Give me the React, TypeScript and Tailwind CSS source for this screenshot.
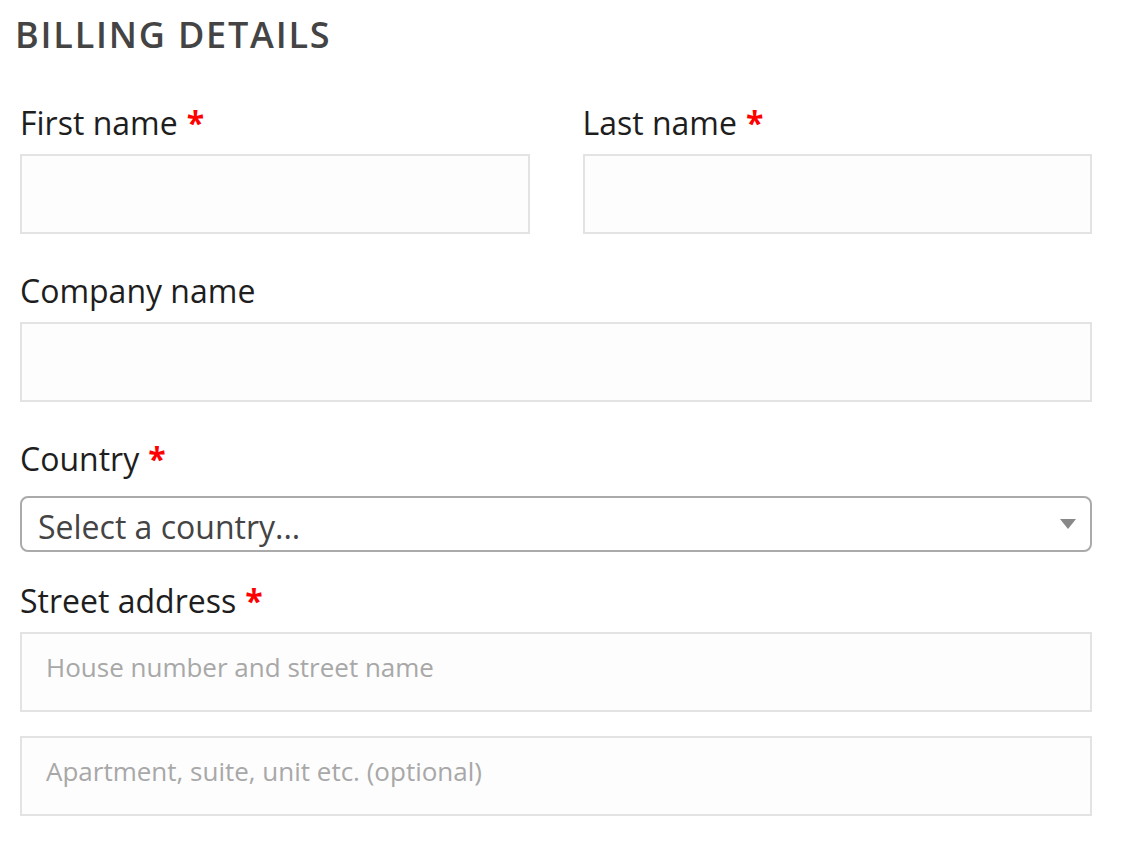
import React from "react";

function Label({ text, required, className = "" }: { text: string; required?: boolean; className?: string }) {
    return (
        <label className={`block text-[32px] leading-[45px] text-[#1e1e1e] ${className}`}>
            {text}
            {required && <span className="ml-[9px] font-bold text-[#ff0000]">*</span>}
        </label>
    );
}

function TextInput({ placeholder, className = "" }: { placeholder?: string; className?: string }) {
    return (
        <input
            type="text"
            placeholder={placeholder}
            className={`block h-[80px] w-full border-2 border-[#e3e3e3] bg-[#fdfdfd] px-[24px] pb-[10px] text-[26px] text-[#444] placeholder-[#a8a8a8] outline-none ${className}`}
        />
    );
}

export default function App() {
    return (
        <div className="min-h-screen bg-white font-['Open_Sans',sans-serif]">
            <form className="w-[1093px] pl-[20px] pr-[1px]">
                <h2 className="-ml-[5px] pt-[12px] text-[36px] font-semibold leading-[46px] tracking-[1.8px] text-[#444]">BILLING DETAILS</h2>

                <div className="mt-[42px] grid grid-cols-2 gap-x-[53px]">
                    <div>
                        <Label text="First name" required />
                        <TextInput className="mt-[9px]" />
                    </div>
                    <div>
                        <Label text="Last name" required />
                        <TextInput className="mt-[9px]" />
                    </div>
                </div>

                <Label text="Company name" className="mt-[34px]" />
                <TextInput className="mt-[9px]" />

                <Label text="Country" required className="mt-[34px]" />
                <div className="relative mt-[15px] flex h-[56px] items-center rounded-[8px] border-2 border-[#aaa] bg-white pl-[16px] pr-[12px]">
                    <span className="flex-1 pt-[5px] text-[32px] leading-[45px] text-[#444]">Select a country...</span>
                    <svg width="16" height="10" viewBox="0 0 16 10" className="mr-[2px]">
                        <path d="M0 0 H16 L8 10 Z" fill="#888" />
                    </svg>
                </div>

                <Label text="Street address" required className="mt-[26px]" />
                <TextInput placeholder="House number and street name" className="mt-[9px]" />
                <TextInput placeholder="Apartment, suite, unit etc. (optional)" className="mt-[24px]" />
            </form>
        </div>
    );
}
